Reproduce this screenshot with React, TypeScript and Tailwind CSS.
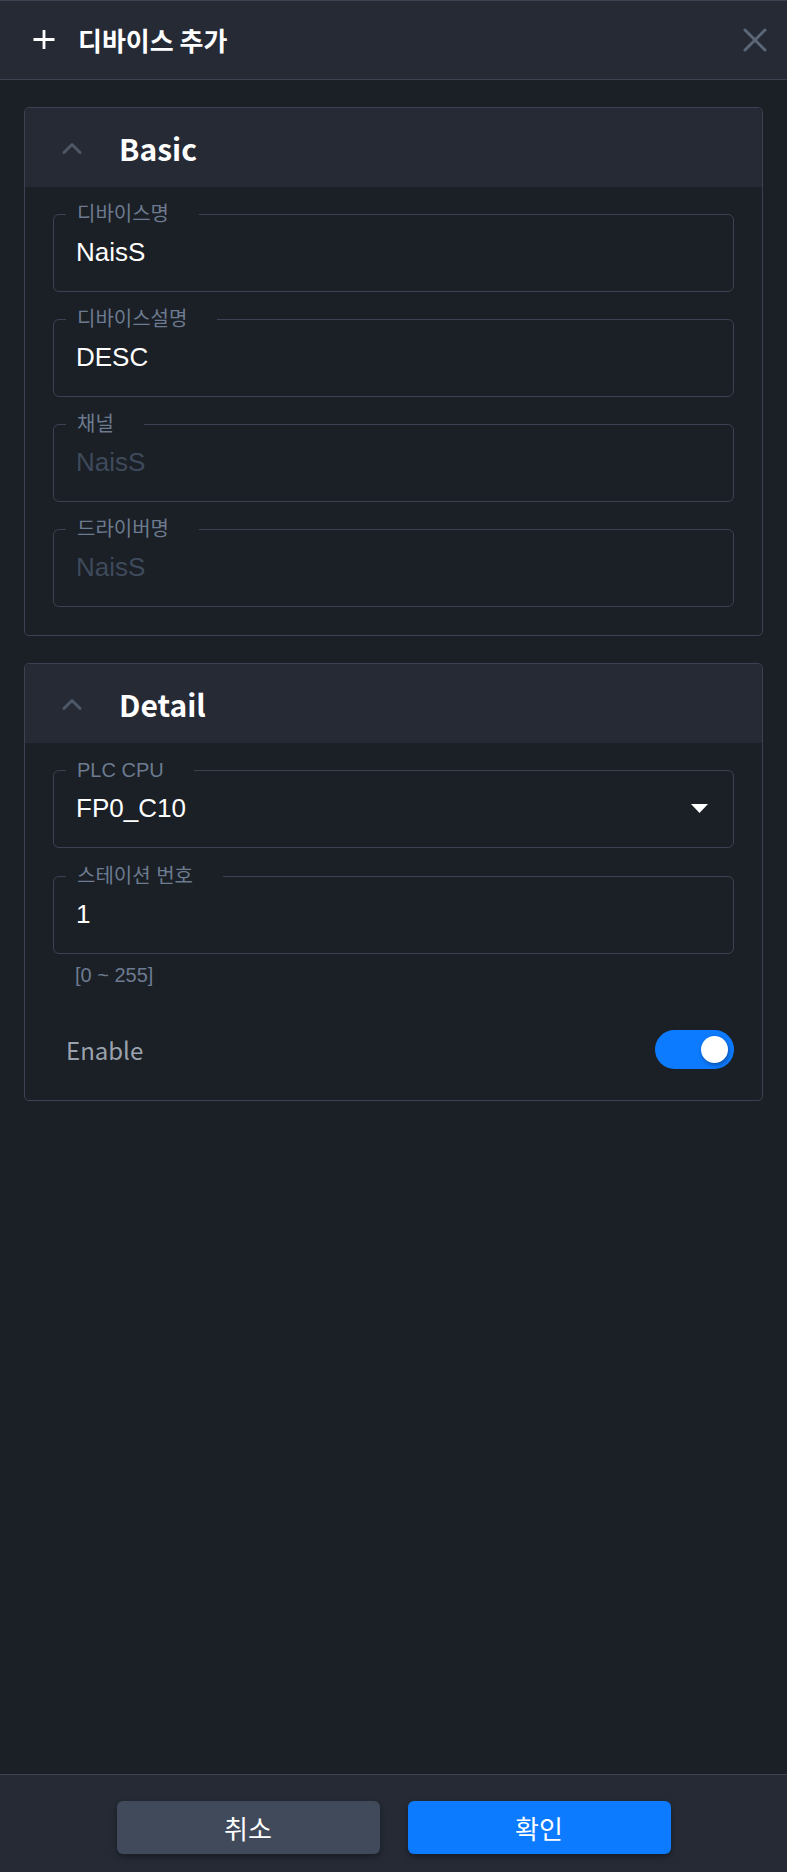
import React from 'react';

const sans = "font-['Liberation_Sans','Noto_Sans_CJK_KR',sans-serif]";
const kr = "font-['Noto_Sans_CJK_KR','Noto_Sans',sans-serif]";

function Chevron() {
  return (
    <svg width="20" height="12" viewBox="0 0 20 12" fill="none">
      <path d="M2 10.5 L10 2.5 L18 10.5" stroke="#4d5766" strokeWidth="3" strokeLinecap="round" strokeLinejoin="round" />
    </svg>
  );
}

function Field({
  label,
  value,
  disabled,
  select,
}: {
  label: string;
  value: string;
  disabled?: boolean;
  select?: boolean;
}) {
  return (
    <fieldset className="min-w-0 rounded-[6px] border border-[#3b4352] px-[12px]">
      <legend className={`${sans} pl-[11px] pr-[30px] text-[20px] leading-[24px] text-[#6c7b8f]`}>{label}</legend>
      <div className="flex h-[65px] items-start justify-between pl-[10px] pr-[13px] pt-[11px]">
        <span className={`${sans} text-[26px] leading-[30px] ${disabled ? 'text-[#3e4a5b]' : 'text-white'}`}>{value}</span>
        {select && (
          <svg width="17" height="9" viewBox="0 0 17 9" className="mt-[11px]">
            <path d="M0 0 H17 L8.5 9 Z" fill="#ffffff" />
          </svg>
        )}
      </div>
    </fieldset>
  );
}

function Section({ title, children, bottom = 'pb-[28px]' }: { title: string; children: React.ReactNode; bottom?: string }) {
  return (
    <section className="rounded-[5px] border border-[#3b4352]">
      <div className="flex h-[79px] items-center rounded-t-[5px] bg-[#252a35] pl-[37px]">
        <Chevron />
        <h2 className={`${kr} ml-[37px] text-[30px] font-bold leading-none text-white`}>{title}</h2>
      </div>
      <div className={`flex flex-col px-[28px] pt-[15px] ${bottom}`}>{children}</div>
    </section>
  );
}

export default function App() {
  return (
    <div className="flex h-[1872px] w-full flex-col bg-[#1b1f26]">
      {/* Header */}
      <header className="flex h-[80px] shrink-0 items-center border-y border-[#3b4352] bg-[#252a35] pl-[32px] pr-[20px]">
        <svg width="24" height="24" viewBox="0 0 24 24" fill="none">
          <path d="M12 2 V21 M1.5 11.5 H22.5" stroke="#ffffff" strokeWidth="2.8" />
        </svg>
        <h1 className={`${kr} ml-[22px] text-[26px] font-bold leading-none text-white`}>디바이스 추가</h1>
        <svg width="24" height="24" viewBox="0 0 24 24" fill="none" className="ml-auto">
          <path d="M2 2 L22 22 M22 2 L2 22" stroke="#5b6677" strokeWidth="3" strokeLinecap="round" />
        </svg>
      </header>

      {/* Body */}
      <main className="flex flex-1 flex-col gap-[27px] px-[24px] pt-[27px]">
        <Section title="Basic">
          <div className="flex flex-col gap-[15px]">
            <Field label="디바이스명" value="NaisS" />
            <Field label="디바이스설명" value="DESC" />
            <Field label="채널" value="NaisS" disabled />
            <Field label="드라이버명" value="NaisS" disabled />
          </div>
        </Section>

        <Section title="Detail" bottom="pb-[31px]">
          <div className="flex flex-col gap-[16px]">
            <Field label="PLC CPU" value="FP0_C10" select />
            <Field label="스테이션 번호" value="1" />
          </div>
          <p className={`${sans} mt-[9px] pl-[22px] text-[20px] leading-[24px] text-[#6c7b8f]`}>[0 ~ 255]</p>
          <div className="mt-[43px] flex h-[39px] items-center justify-between pl-[13px]">
            <span className={`${kr} text-[24px] leading-none text-[#9aa3ad]`}>Enable</span>
            <button className="relative h-[39px] w-[79px] rounded-full bg-[#0d7bff]">
              <span className="absolute right-[6px] top-[6px] h-[27px] w-[27px] rounded-full bg-white shadow-[1px_2px_4px_rgba(0,0,0,0.35)]" />
            </button>
          </div>
        </Section>
      </main>

      {/* Footer */}
      <footer className="flex h-[98px] shrink-0 justify-center gap-[28px] border-t border-[#3b4352] bg-[#252a35] pt-[26px]">
        <button className={`${kr} h-[53px] w-[263px] rounded-[6px] bg-[#414a5a] text-[26px] text-white shadow-[0_3px_6px_rgba(0,0,0,0.35)]`}>취소</button>
        <button className={`${kr} h-[53px] w-[263px] rounded-[6px] bg-[#0d7bff] text-[26px] text-white shadow-[0_3px_6px_rgba(0,0,0,0.35)]`}>확인</button>
      </footer>
    </div>
  );
}
